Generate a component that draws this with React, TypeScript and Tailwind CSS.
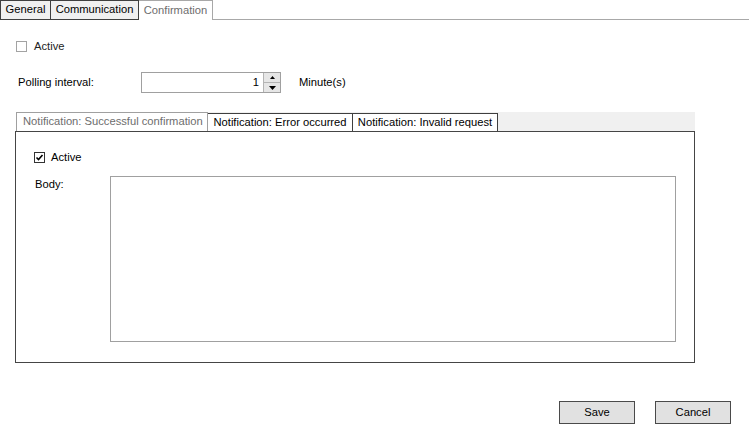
import React from "react";

const Box = ({ checked }: { checked?: boolean }) => (
  <div className={`w-[11px] h-[11px] border bg-white flex items-center justify-center ${checked ? "border-[#333333]" : "border-[#a3a3a3]"}`}>
    {checked && (
      <svg width="9" height="9" viewBox="0 0 9 9">
        <path d="M1.5 4.5 L3.5 6.5 L7.5 2" stroke="#000" strokeWidth="1.6" fill="none" />
      </svg>
    )}
  </div>
);

const Spinner = () => (
  <div className="flex flex-col w-[17px] h-full border-l border-[#b4b4b4]">
    <div className="flex-1 bg-[#e6e6e6] flex items-center justify-center border-b border-[#b4b4b4]">
      <svg width="5" height="3" viewBox="0 0 5 3"><path d="M2.5 0 L5 3 L0 3Z" fill="#000" /></svg>
    </div>
    <div className="flex-1 bg-[#e6e6e6] flex items-center justify-center">
      <svg width="7" height="4" viewBox="0 0 7 4"><path d="M0 0 L7 0 L3.5 4Z" fill="#000" /></svg>
    </div>
  </div>
);

export default function App() {
  return (
    <div className="w-[749px] h-[431px] bg-white text-black text-[11.2px] leading-none font-['Liberation_Sans',Arial,sans-serif] overflow-hidden">
      {/* top tabs */}
      <div className="flex h-[20px]">
        <div className="w-[51px] bg-[#f0f0f0] border border-[#3f3f3f] flex items-center justify-center">General</div>
        <div className="w-[88px] bg-[#f0f0f0] border-y border-r border-[#3f3f3f] flex items-center justify-center">Communication</div>
        <div className="w-[74px] bg-white border-t border-r border-[#a8a8a8] flex items-center justify-center text-[#6d6d6d]">Confirmation</div>
        <div className="flex-1 border-b border-[#a8a8a8]"></div>
      </div>

      <div className="flex items-center gap-[7px] pl-[16px] mt-[21px] h-[11px]">
        <Box />
        <span className="text-[#222]">Active</span>
      </div>

      <div className="flex items-center mt-[20px] h-[21px] pl-[18px]">
        <span className="w-[123px]">Polling interval:</span>
        <div className="flex w-[140px] h-full border border-[#a0a0a0] bg-white">
          <div className="flex-1 flex items-center justify-end pr-[4px]">1</div>
          <Spinner />
        </div>
        <span className="ml-[18px]">Minute(s)</span>
      </div>

      {/* inner tab control */}
      <div className="ml-[15px] mt-[19px] w-[680px]">
        <div className="flex h-[19px] bg-[#f0f0f0] ml-[1px]">
          <div className="w-[192px] bg-white border-t border-l border-r border-[#a0a0a0] flex items-center pl-[6px] text-[#6d6d6d]">
            Notification: Successful confirmation
          </div>
          <div className="w-[145px] mt-[1px] bg-white border-t border-r border-[#3f3f3f] flex items-center justify-center">
            Notification: Error occurred
          </div>
          <div className="w-[145px] mt-[1px] bg-white border-t border-r border-[#3f3f3f] flex items-center justify-center">
            Notification: Invalid request
          </div>
        </div>
        <div className="h-[232px] border border-[#454545] bg-white pt-[20px]">
          <div className="flex items-center gap-[6px] pl-[18px] h-[11px]">
            <Box checked />
            <span>Active</span>
          </div>
          <div className="flex mt-[13px] pl-[19px]">
            <span className="w-[75px] pt-[3px]">Body:</span>
            <div className="w-[566px] h-[166px] border border-[#a0a0a0] bg-white"></div>
          </div>
        </div>
      </div>

      <div className="flex justify-end gap-[20px] pr-[18px] mt-[38px]">
        <button className="w-[76px] h-[23px] bg-[#e1e1e1] border border-[#4a4a4a] flex items-center justify-center">Save</button>
        <button className="w-[76px] h-[23px] bg-[#e1e1e1] border border-[#4a4a4a] flex items-center justify-center">Cancel</button>
      </div>
    </div>
  );
}
